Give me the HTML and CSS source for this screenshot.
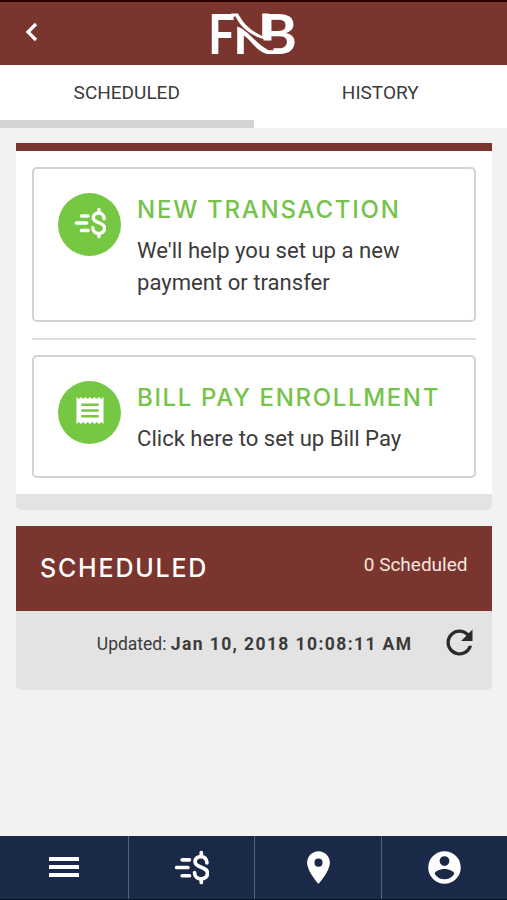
FILE: index.html
```
<!DOCTYPE html>
<html lang="en">
<head>
    <meta charset="UTF-8">
    <meta name="viewport" content="width=device-width, initial-scale=1.0">
    <title>FNB - Scheduled</title>
    <link rel="stylesheet" href="styles.css">
</head>
<body>

    <!-- Shared icon -->
    <svg class="icon-defs" width="0" height="0">
        <symbol id="icon-pay" viewBox="0 0 34 34">
            <g fill="none" stroke="currentColor" stroke-linecap="round" stroke-width="3.6">
                <path d="M8 9.500h7M2.500 17h11M8 25h7"/>
                <path d="M32 12.500C32 4.500 20.500 4.500 20.500 11.500C20.500 18 32.500 15.500 32.500 22.500C32.500 30 20 30 20 22M26.500 2.500v3M26.500 28.500v3"/>
            </g>
        </symbol>
    </svg>

    <!-- Header -->
    <header class="header">
        <a href="#" class="back" aria-label="Back">
            <svg width="14" height="20" viewBox="0 0 14 20"><path d="M11 2L3 10l8 8" fill="none" stroke="#fff" stroke-width="3.3"/></svg>
        </a>
        <svg class="logo" width="90" height="62" viewBox="0 0 90 62">
            <text class="logo-text" x="-1" y="51" textLength="27" lengthAdjust="spacingAndGlyphs">F</text>
            <text class="logo-text" x="50" y="51" textLength="38" lengthAdjust="spacingAndGlyphs">B</text>
            <!-- Ribbons between the initials -->
            <path class="logo-gap" d="M50 37.500h14.500v10H50zM50 45h8v8h-8z"/>
            <path class="logo-ribbon" d="M22 10.500h7C34 20 41 27.500 53.200 33V10.500h6.600V37.500C45 34 33 27 26.500 13.500H22z"/>
            <path class="logo-ribbon" d="M28.200 23.500C39 27 47 41 60 47.500h7V51h-8.500C48 49 42 37 34.800 32.500V51h-6.600z"/>
        </svg>
    </header>

    <!-- Tabs -->
    <nav class="tabs">
        <a href="#" class="tab active">SCHEDULED</a>
        <a href="#" class="tab">HISTORY</a>
    </nav>

    <!-- Main content -->
    <main class="content">
        <section class="card">
            <div class="card-body">
                <a href="#" class="option">
                    <span class="circle"><svg width="32" height="32"><use href="#icon-pay"/></svg></span>
                    <div class="option-text">
                        <h2 class="title-new">NEW TRANSACTION</h2>
                        <p>We'll help you set up a new<br>payment or transfer</p>
                    </div>
                </a>
                <hr>
                <a href="#" class="option">
                    <span class="circle">
                        <svg width="28" height="29" viewBox="0 0 28 30">
                            <path fill="#fff" d="M0 1l2.300 2 2.350-2L7 3l2.300-2 2.350 2L14 1l2.300 2 2.350-2L21 3l2.300-2 2.350 2L28 1v28l-2.350-2-2.350 2L21 27l-2.350 2-2.350-2L14 29l-2.350-2L9.300 29 7 27l-2.350 2-2.350-2L0 29z"/>
                            <path stroke="#76c843" stroke-width="2.700" d="M5 9h18M5 15h18M5 21h18"/>
                        </svg>
                    </span>
                    <div class="option-text">
                        <h2 class="title-bill">BILL PAY ENROLLMENT</h2>
                        <p>Click here to set up Bill Pay</p>
                    </div>
                </a>
            </div>
            <div class="card-footer"></div>
        </section>

        <section class="scheduled">
            <div class="scheduled-header">
                <h2>SCHEDULED</h2>
                <span class="count">0 Scheduled</span>
            </div>
            <div class="scheduled-footer">
                <span class="updated">Updated: <strong>Jan 10, 2018 10:08:11 AM</strong></span>
                <svg width="39" height="39" viewBox="0 0 24 24"><path fill="#2b2b2b" d="M17.650 6.350A7.958 7.958 0 0 0 12 4a8 8 0 1 0 7.730 10h-2.080A6 6 0 1 1 12 6c1.660 0 3.140.690 4.220 1.780L13 11h7V4z"/></svg>
            </div>
        </section>
    </main>

    <!-- Bottom navigation -->
    <nav class="bottom-nav">
        <a href="#" aria-label="Menu"><svg width="30" height="22" viewBox="0 0 30 22"><path stroke="#fff" stroke-width="3.800" d="M0 3h30M0 11h30M0 19h30"/></svg></a>
        <a href="#" aria-label="Payments"><svg width="35" height="35"><use href="#icon-pay"/></svg></a>
        <a href="#" aria-label="Locations"><svg width="39" height="39" viewBox="0 0 24 24"><path fill="#fff" d="M12 2C8.130 2 5 5.130 5 9c0 5.250 7 13 7 13s7-7.750 7-13c0-3.870-3.130-7-7-7zm0 9.500a2.500 2.500 0 1 1 0-5 2.500 2.500 0 0 1 0 5z"/></svg></a>
        <a href="#" aria-label="Profile"><svg width="39" height="39" viewBox="0 0 24 24"><path fill="#fff" d="M12 2a10 10 0 1 0 0 20 10 10 0 0 0 0-20zm0 3a3 3 0 1 1 0 6 3 3 0 0 1 0-6zm0 14.200A7.200 7.200 0 0 1 6 15.980c.030-1.990 4-3.080 6-3.080s5.970 1.090 6 3.080a7.200 7.200 0 0 1-6 3.220z"/></svg></a>
    </nav>

</body>
</html>
```
FILE: styles.css
```
* {
    box-sizing: border-box;
}

body {
    font-family: Roboto, sans-serif;
    display: flex;
    flex-direction: column;
    height: 900px;
    margin: 0;
    background-color: #f2f2f2;
    color: #3b3b3b;
}

a {
    color: inherit;
    text-decoration: none;
}

h2, p {
    margin: 0;
}

svg {
    display: block;
}

.icon-defs {
    display: none;
}

/* Header */
.header {
    display: grid;
    grid-template-columns: 1fr 90px 1fr;
    align-items: center;
    height: 65px;
    border-top: 2px solid #260000;
    background-color: #7a352f;
}

.back {
    padding: 0 0 3px 25px;
}

.logo {
    overflow: visible;
}

.logo-text {
    font-family: Lato, sans-serif;
    font-size: 56px;
    font-weight: 700;
    fill: #fff;
}

.logo-gap {
    fill: #7a352f;
}

.logo-ribbon {
    fill: #fff;
}

/* Tabs */
.tabs {
    display: flex;
    height: 63px;
    background-color: #fff;
}

.tab {
    flex: 1;
    padding-top: 16px;
    font-size: 19px;
    line-height: 24px;
    text-align: center;
    border-bottom: 8px solid transparent;
}

.tab.active {
    border-bottom-color: #d3d3d3;
}

/* Cards */
.content {
    flex: 1;
    padding: 15px 15.5px 0 16px;
}

.card {
    border-top: 8px solid #7a352f;
}

.card-body {
    padding: 16px 16px;
    background-color: #fff;
}

.card-footer {
    height: 16px;
    background-color: #e3e3e3;
    border-radius: 0 0 5px 5px;
}

.option {
    display: flex;
    gap: 16px;
    padding: 24px 24px 22px;
    border: 2px solid #d2d2d2;
    border-radius: 5px;
}

.circle {
    display: flex;
    flex: none;
    align-items: center;
    justify-content: center;
    width: 63px;
    height: 63px;
    padding-bottom: 4px;
    border-radius: 50%;
    background-color: #76c843;
    color: #fff;
}

.option h2 {
    font-family: Inter, sans-serif;
    font-size: 24px;
    font-weight: 500;
    line-height: 34px;
    color: #76c34c;
    white-space: nowrap;
}

.option .title-new {
    letter-spacing: 1.75px;
}

.option .title-bill {
    letter-spacing: 1.65px;
}

.option p {
    padding-top: 7px;
    font-size: 22.1px;
    line-height: 32px;
    white-space: nowrap;
}

hr {
    height: 2px;
    margin: 16px 0 15px;
    border: none;
    background-color: #dedede;
}

/* Scheduled list */
.scheduled {
    margin-top: 16px;
}

.scheduled-header {
    display: flex;
    justify-content: space-between;
    height: 85px;
    padding: 25px 24px 0;
    background-color: #7a352f;
    color: #fff;
}

.scheduled-header h2 {
    font-family: Inter, sans-serif;
    font-size: 25px;
    font-weight: 500;
    line-height: 34px;
    letter-spacing: 1.8px;
}

.count {
    font-size: 19px;
    line-height: 28px;
    color: #f7e5df;
}

.scheduled-footer {
    display: flex;
    justify-content: flex-end;
    gap: 27px;
    height: 79px;
    padding: 12px 13px 0 0;
    background-color: #e3e3e3;
    border-radius: 0 0 5px 5px;
}

.updated {
    font-size: 17.5px;
    line-height: 43px;
}

.updated strong {
    letter-spacing: 1.4px;
}

/* Bottom navigation */
.bottom-nav {
    display: grid;
    grid-template-columns: 128px 126px 127px 1fr;
    height: 64px;
    background-color: #1b2948;
    border-bottom: 1px solid #050d20;
}

.bottom-nav a {
    display: flex;
    align-items: center;
    justify-content: center;
    padding-bottom: 1px;
    color: #fff;
}

.bottom-nav a + a {
    border-left: 1px solid #56617d;
}
```
